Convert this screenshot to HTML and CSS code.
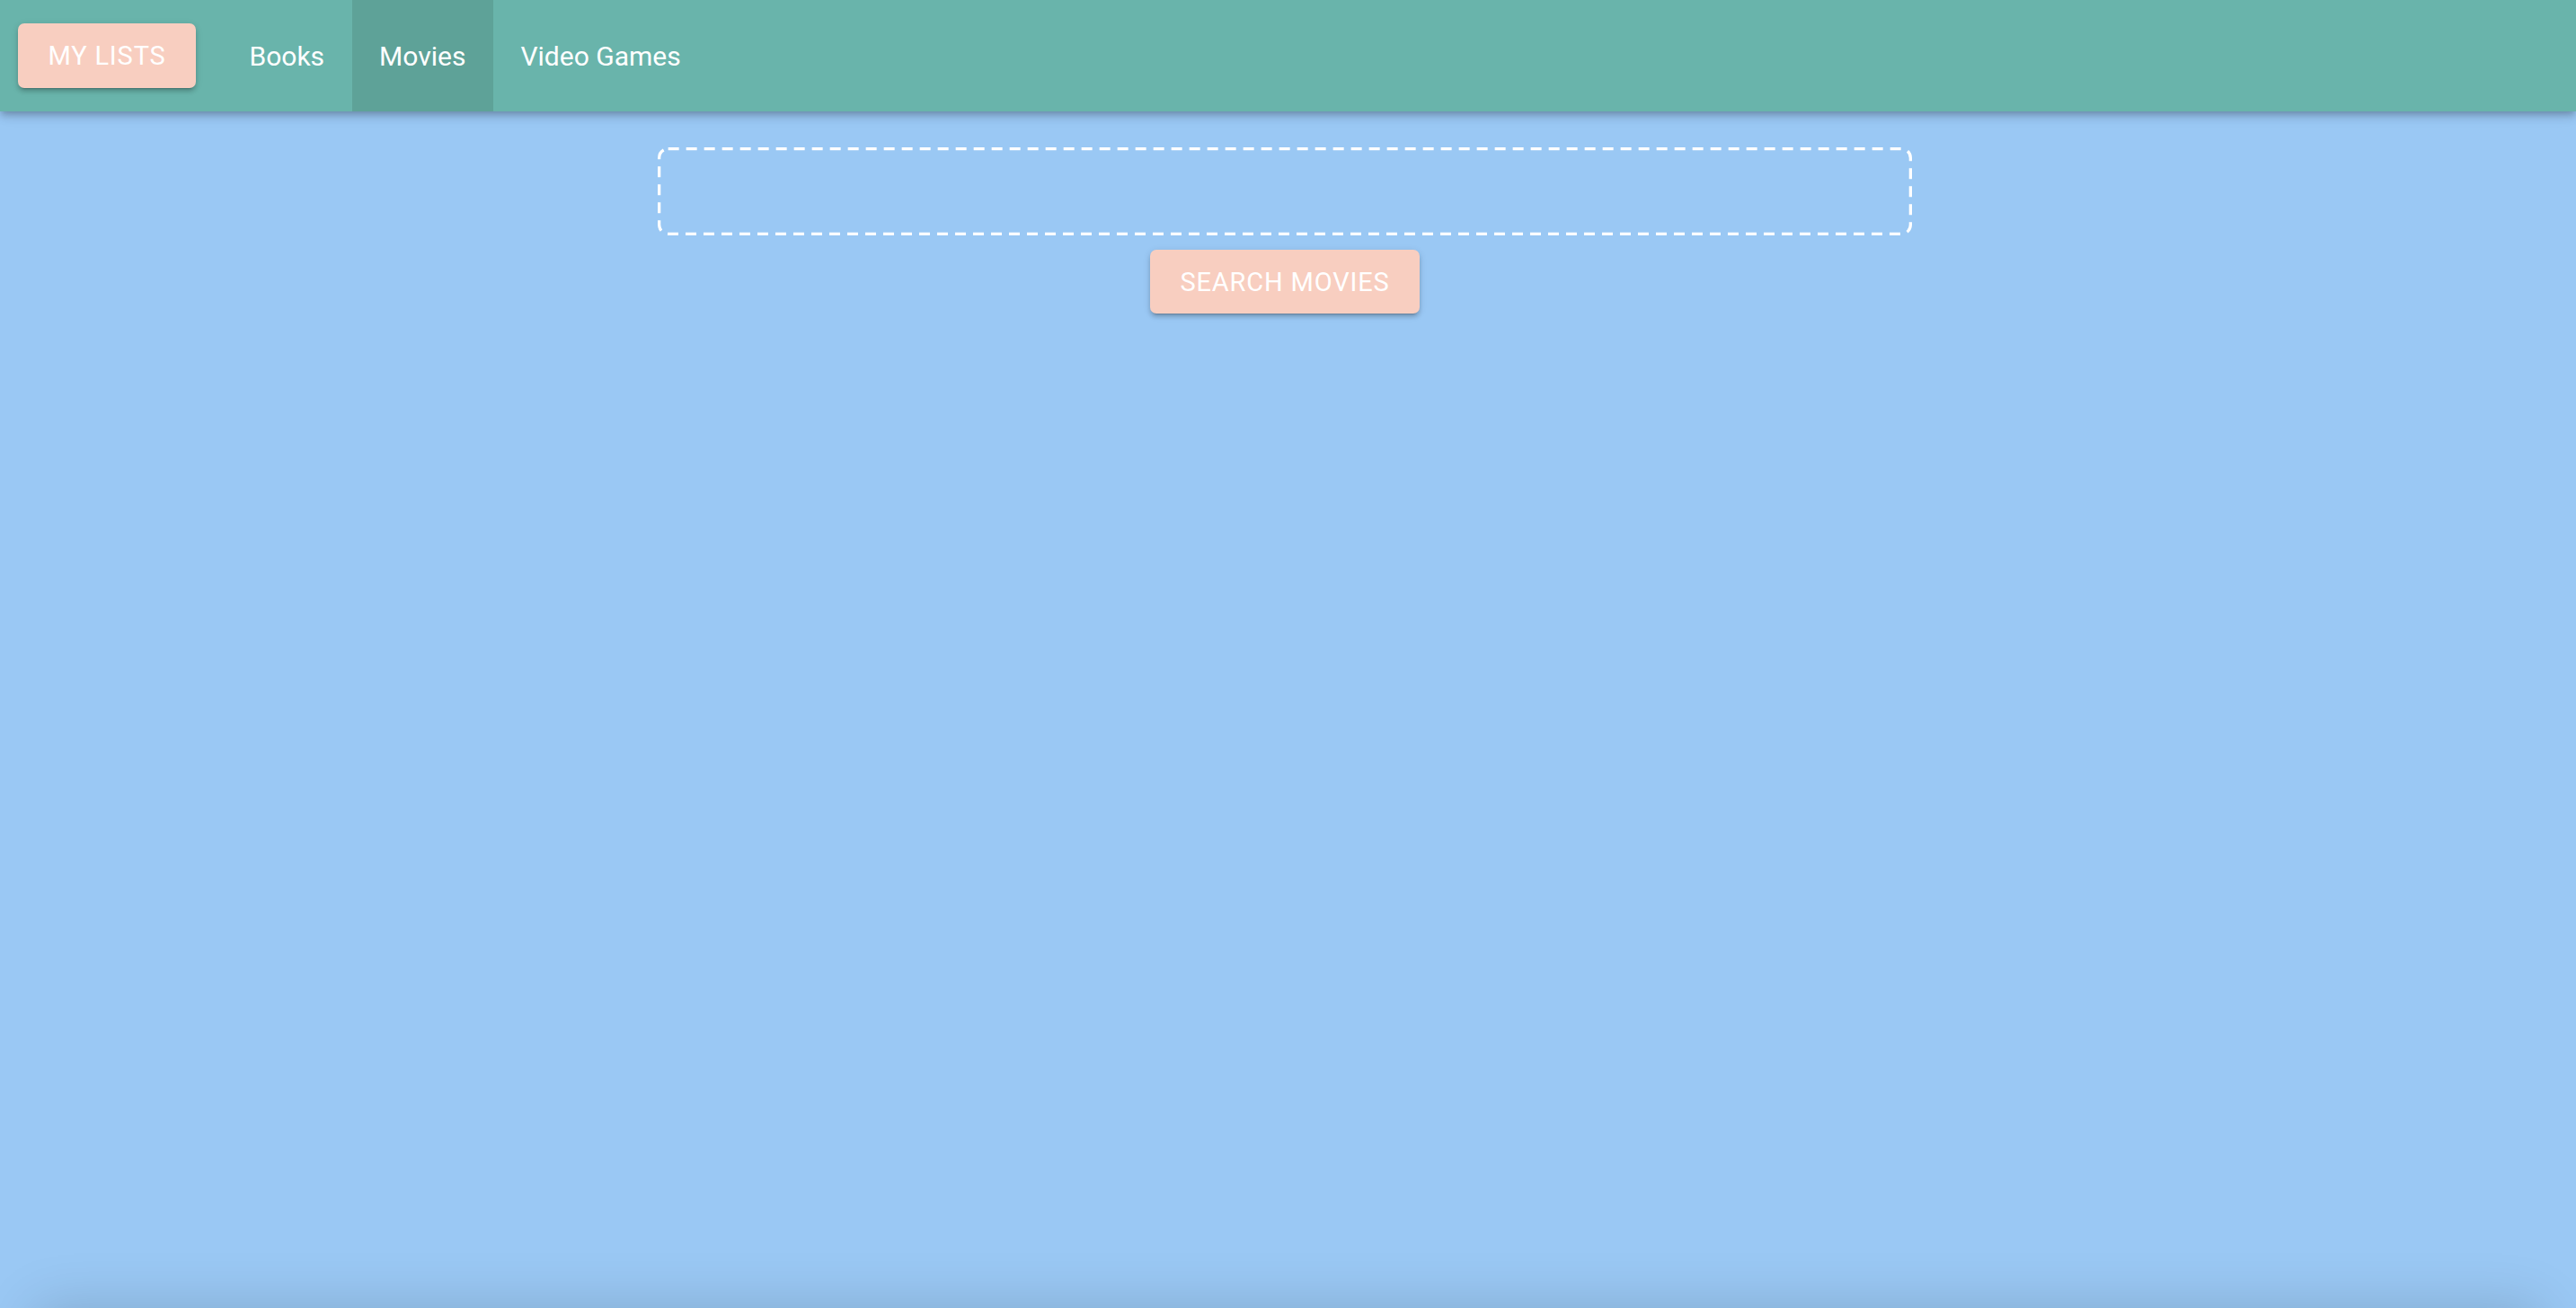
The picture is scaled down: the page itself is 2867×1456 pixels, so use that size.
FILE: index.html
```html
<!DOCTYPE html>
<html lang="en">
<head>
<meta charset="utf-8">
<title>My Lists - Movies</title>
<link rel="stylesheet" href="styles.css">
</head>
<body>
<div class="page">
  <header class="appbar">
    <button class="btn btn-lists" type="button">My Lists</button>
    <nav class="tabs">
      <a class="tab" href="#">Books</a>
      <a class="tab tab-active" href="#">Movies</a>
      <a class="tab" href="#">Video Games</a>
    </nav>
  </header>
  <main class="search">
    <div class="search-field">
      <svg class="search-outline" width="1396" height="98" viewBox="0 0 1396 98" aria-hidden="true">
        <rect x="1.65" y="1.65" width="1392.7" height="94.7" rx="10" ry="10" fill="none" stroke="#ffffff" stroke-width="3.3" stroke-dasharray="12 8"/>
      </svg>
      <input class="search-input" type="text" aria-label="Search movies">
    </div>
    <button class="btn btn-search" type="button">Search Movies</button>
  </main>
</div>
<section class="results"></section>
</body>
</html>
```

FILE: styles.css
```css
html, body {
  margin: 0;
  padding: 0;
}
body {
  background: #9ac8f4;
  font-family: Roboto, "Liberation Sans", sans-serif;
  overflow: hidden;
}
.page {
  min-height: 100vh;
  display: flex;
  flex-direction: column;
}
.appbar {
  height: 124px;
  background: #69b4ab;
  display: flex;
  align-items: center;
  padding-left: 20px;
  box-shadow: 0 4px 7px -2px rgba(0,0,0,0.2), 0 7px 9px 0 rgba(0,0,0,0.10), 0 2px 18px 0 rgba(0,0,0,0.08);
  position: relative;
  z-index: 2;
}
.btn {
  border: none;
  background: #f8cec0;
  color: #ffffff;
  font-family: Roboto, "Liberation Sans", sans-serif;
  font-size: 29px;
  font-weight: 400;
  letter-spacing: 0.83px;
  text-transform: uppercase;
  height: 72px;
  padding: 0 33px;
  border-radius: 7px;
  display: inline-flex;
  align-items: center;
  justify-content: center;
  box-shadow: 0 5px 2px -4px rgba(0,0,0,0.2), 0 4px 4px 0 rgba(0,0,0,0.14), 0 2px 9px 0 rgba(0,0,0,0.12);
  cursor: pointer;
}
.btn-lists {
  width: 198px;
  margin-right: 29px;
}
.tabs {
  display: flex;
  height: 100%;
}
.tab {
  display: flex;
  align-items: center;
  height: 100%;
  padding: 0 30.5px;
  color: #ffffff;
  text-decoration: none;
  font-size: 30px;
}
.tab-active {
  background: #5ea298;
}
.search {
  display: flex;
  flex-direction: column;
  align-items: center;
  padding-top: 40px;
  padding-right: 7px;
}
.search-field {
  position: relative;
  width: 1396px;
  height: 98px;
}
.search-outline {
  position: absolute;
  left: 0;
  top: 0;
  pointer-events: none;
}
.search-input {
  box-sizing: border-box;
  width: 100%;
  height: 100%;
  border: none;
  border-radius: 10px;
  background: transparent;
  outline: none;
  font-family: Roboto, "Liberation Sans", sans-serif;
  font-size: 30px;
  color: #ffffff;
  padding: 0 24px;
}
.btn-search {
  margin-top: 16px;
  width: 300px;
  height: 71px;
  padding: 0;
}
.results {
  height: 200px;
  margin: 0 40px;
  background: #9ac8f4;
  box-shadow: 0 0 60px rgba(0,0,0,0.16);
}
```
